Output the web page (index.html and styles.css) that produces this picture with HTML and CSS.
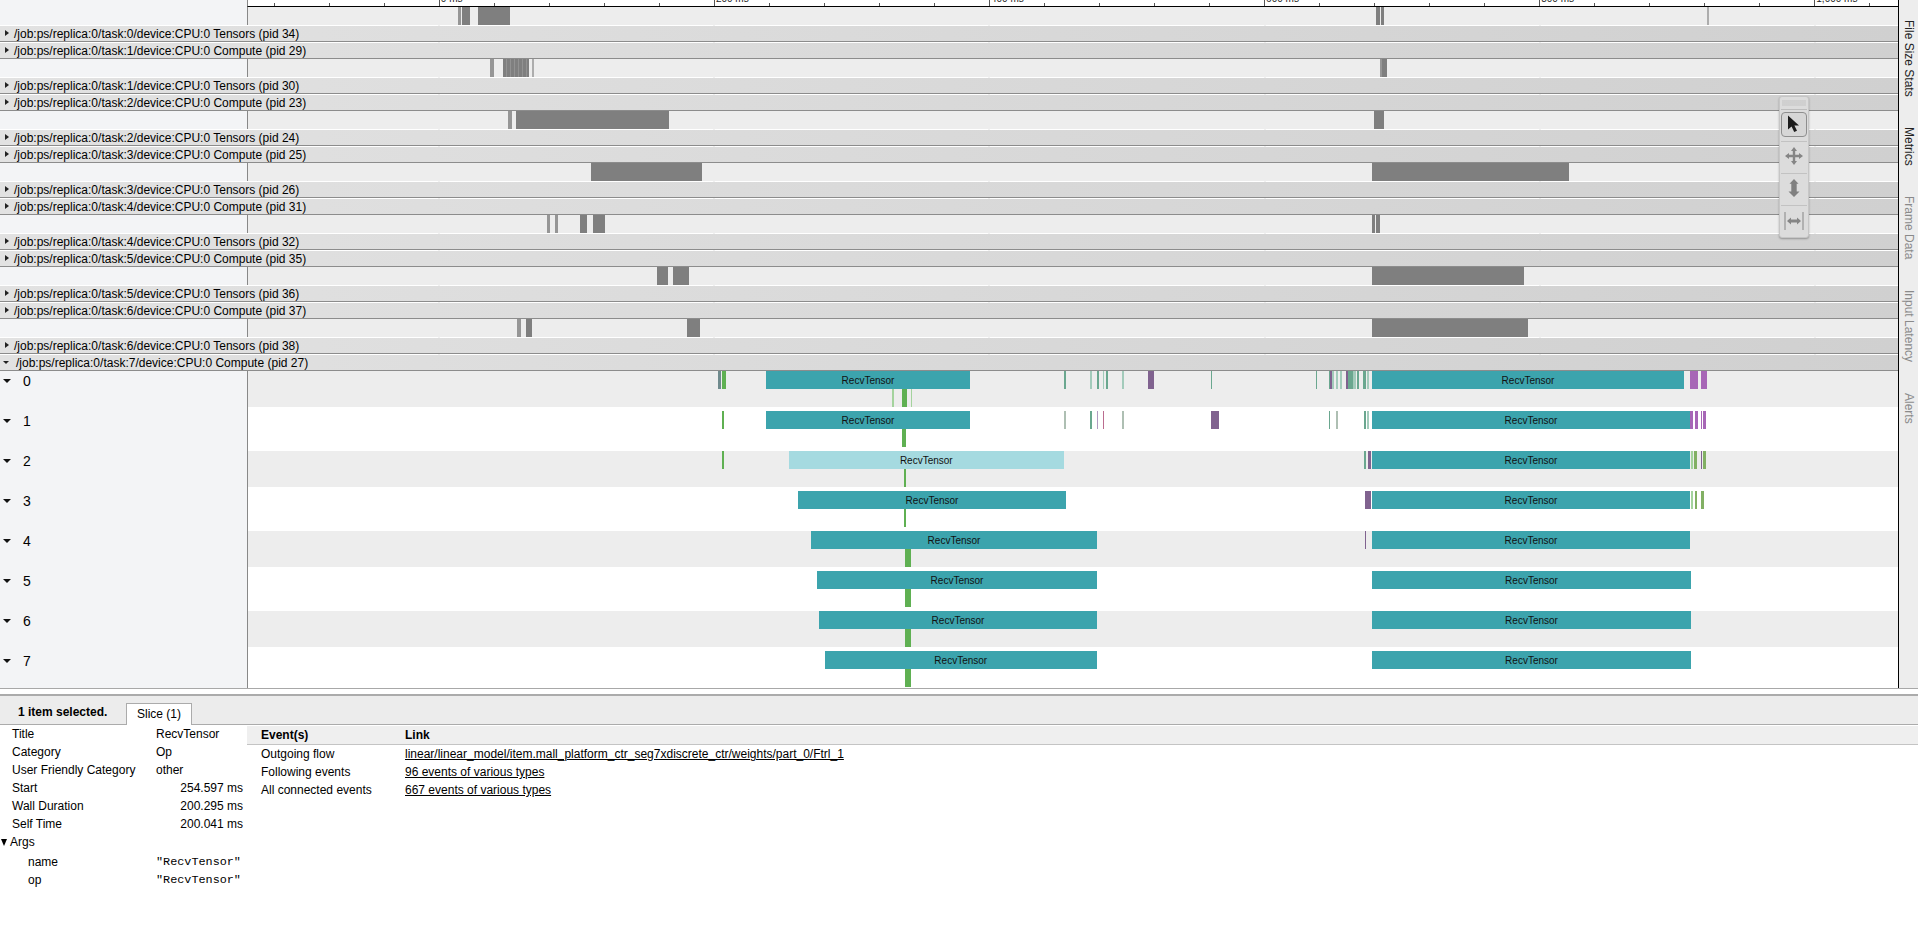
FILE: index.html
```html
<!DOCTYPE html>
<html lang="en">
<head>
<meta charset="utf-8">
<title>Trace viewer</title>
<link rel="stylesheet" href="styles.css">
</head>
<body>
<div class="app">
  <div class="timeline">
    <div class="main">
      <div class="ruler">
        <div class="ruler-left"></div>
        <div class="ruler-track">
          <i class="tick" style="left:25.5px"></i><i class="tick" style="left:80.6px"></i><i class="tick" style="left:135.7px"></i>
          <i class="tick major" style="left:190.8px"><b>0 ms</b></i>
          <i class="tick" style="left:245.8px"></i><i class="tick" style="left:300.8px"></i><i class="tick" style="left:355.8px"></i><i class="tick" style="left:410.8px"></i>
          <i class="tick major" style="left:465.9px"><b>200 ms</b></i>
          <i class="tick" style="left:520.9px"></i><i class="tick" style="left:575.9px"></i><i class="tick" style="left:630.9px"></i><i class="tick" style="left:685.9px"></i>
          <i class="tick major" style="left:741px"><b>400 ms</b></i>
          <i class="tick" style="left:796px"></i><i class="tick" style="left:851px"></i><i class="tick" style="left:906px"></i><i class="tick" style="left:961px"></i>
          <i class="tick major" style="left:1016.1px"><b>600 ms</b></i>
          <i class="tick" style="left:1071.1px"></i><i class="tick" style="left:1126.1px"></i><i class="tick" style="left:1181.1px"></i><i class="tick" style="left:1236.1px"></i>
          <i class="tick major" style="left:1291.2px"><b>800 ms</b></i>
          <i class="tick" style="left:1346.2px"></i><i class="tick" style="left:1401.2px"></i><i class="tick" style="left:1456.2px"></i><i class="tick" style="left:1511.2px"></i>
          <i class="tick major" style="left:1566.3px"><b>1,000 ms</b></i>
          <i class="tick" style="left:1621.3px"></i>
        </div>
      </div>

      <div class="tracks">
        <div class="grid">
          <i style="left:438.2px"></i><i style="left:713.3px"></i><i style="left:988.4px"></i><i style="left:1263.5px"></i><i style="left:1538.6px"></i><i style="left:1813.7px"></i>
        </div>

        <div class="slices">
          <div class="gutter"></div>
          <div class="lane">
            <i class="s lite" style="left:210px;width:2.5px"></i><i class="s" style="left:214px;width:7.5px"></i><i class="s" style="left:229.6px;width:32px"></i>
            <i class="s" style="left:1128px;width:4px"></i><i class="s" style="left:1133px;width:3px"></i><i class="s pale" style="left:1459.4px;width:1.6px"></i>
          </div>
        </div>
        <div class="head gap"><i class="tri"></i>/job:ps/replica:0/task:0/device:CPU:0 Tensors (pid 34)</div>
        <div class="head"><i class="tri"></i>/job:ps/replica:0/task:1/device:CPU:0 Compute (pid 29)</div>
        <div class="slices">
          <div class="gutter"></div>
          <div class="lane">
            <i class="s lite" style="left:242px;width:4px"></i><i class="s stripe" style="left:255px;width:26px"></i><i class="s pale" style="left:284px;width:2px"></i>
            <i class="s lite" style="left:1132.4px;width:2px"></i><i class="s" style="left:1134.4px;width:5px"></i>
          </div>
        </div>
        <div class="head gap"><i class="tri"></i>/job:ps/replica:0/task:1/device:CPU:0 Tensors (pid 30)</div>
        <div class="head"><i class="tri"></i>/job:ps/replica:0/task:2/device:CPU:0 Compute (pid 23)</div>
        <div class="slices">
          <div class="gutter"></div>
          <div class="lane">
            <i class="s lite" style="left:259.8px;width:4px"></i><i class="s" style="left:268px;width:153.4px"></i>
            <i class="s" style="left:1126px;width:10px"></i>
          </div>
        </div>
        <div class="head gap"><i class="tri"></i>/job:ps/replica:0/task:2/device:CPU:0 Tensors (pid 24)</div>
        <div class="head"><i class="tri"></i>/job:ps/replica:0/task:3/device:CPU:0 Compute (pid 25)</div>
        <div class="slices">
          <div class="gutter"></div>
          <div class="lane">
            <i class="s" style="left:343.4px;width:110.6px"></i>
            <i class="s" style="left:1124.3px;width:196.3px"></i>
          </div>
        </div>
        <div class="head gap"><i class="tri"></i>/job:ps/replica:0/task:3/device:CPU:0 Tensors (pid 26)</div>
        <div class="head"><i class="tri"></i>/job:ps/replica:0/task:4/device:CPU:0 Compute (pid 31)</div>
        <div class="slices">
          <div class="gutter"></div>
          <div class="lane">
            <i class="s lite" style="left:298.8px;width:3px"></i><i class="s lite" style="left:307.4px;width:3px"></i><i class="s" style="left:332px;width:7px"></i><i class="s" style="left:345px;width:12px"></i>
            <i class="s" style="left:1123.5px;width:3px"></i><i class="s" style="left:1128px;width:3.5px"></i>
          </div>
        </div>
        <div class="head gap"><i class="tri"></i>/job:ps/replica:0/task:4/device:CPU:0 Tensors (pid 32)</div>
        <div class="head"><i class="tri"></i>/job:ps/replica:0/task:5/device:CPU:0 Compute (pid 35)</div>
        <div class="slices">
          <div class="gutter"></div>
          <div class="lane">
            <i class="s" style="left:409px;width:11px"></i><i class="s" style="left:425px;width:15.6px"></i>
            <i class="s" style="left:1124px;width:152px"></i>
          </div>
        </div>
        <div class="head gap"><i class="tri"></i>/job:ps/replica:0/task:5/device:CPU:0 Tensors (pid 36)</div>
        <div class="head"><i class="tri"></i>/job:ps/replica:0/task:6/device:CPU:0 Compute (pid 37)</div>
        <div class="slices">
          <div class="gutter"></div>
          <div class="lane">
            <i class="s lite" style="left:269.4px;width:3.6px"></i><i class="s" style="left:278px;width:6px"></i><i class="s" style="left:439.4px;width:12.2px"></i>
            <i class="s" style="left:1124px;width:156px"></i>
          </div>
        </div>
        <div class="head gap"><i class="tri"></i>/job:ps/replica:0/task:6/device:CPU:0 Tensors (pid 38)</div>
        <div class="head open"><i class="tri"></i>/job:ps/replica:0/task:7/device:CPU:0 Compute (pid 27)</div>

        <div class="thread even">
          <div class="tlabel"><i class="tri-d"></i>0</div>
          <div class="tlane">
            <i class="m gb t1" style="left:470px;width:2.7px"></i><i class="m g t1" style="left:474px;width:4px"></i>
            <i class="bar" style="left:518px;width:204px">RecvTensor</i>
            <i class="m gl t2" style="left:644px;width:2px"></i><i class="m g t2" style="left:654px;width:5.3px"></i><i class="m gl t2" style="left:663px;width:1px"></i>
            <i class="m tg t1" style="left:816.3px;width:1.7px"></i><i class="m tgl t1" style="left:842px;width:2px"></i><i class="m tg t1" style="left:849px;width:1.6px"></i><i class="m tgl t1" style="left:854.5px;width:1.5px"></i><i class="m tg t1" style="left:858px;width:1.5px"></i><i class="m tgl t1" style="left:874px;width:2px"></i><i class="m p t1" style="left:900px;width:5.6px"></i><i class="m tg t1" style="left:963px;width:1px"></i>
            <i class="m tg t1" style="left:1068px;width:1.3px"></i><i class="m tg t1" style="left:1081px;width:1px"></i><i class="m p t1" style="left:1082px;width:1.7px"></i><i class="m tgl t1" style="left:1084.3px;width:1.4px"></i><i class="m tgl t1" style="left:1088px;width:1.5px"></i><i class="m tgl t1" style="left:1092px;width:2px"></i><i class="m p t1" style="left:1098.3px;width:2px"></i><i class="m tg t1" style="left:1100.3px;width:4.5px"></i><i class="m tgl t1" style="left:1105.3px;width:2.7px"></i><i class="m tg t1" style="left:1109px;width:2.4px"></i><i class="m tg t1" style="left:1115px;width:2.7px"></i><i class="m tgl t1" style="left:1119px;width:2px"></i>
            <i class="bar" style="left:1124px;width:312px">RecvTensor</i>
            <i class="m pl t1" style="left:1442px;width:7.7px"></i><i class="m pl t1" style="left:1453px;width:5.7px"></i>
          </div>
        </div>

        <div class="thread odd">
          <div class="tlabel"><i class="tri-d"></i>1</div>
          <div class="tlane">
            <i class="m g t1" style="left:474px;width:2px"></i>
            <i class="bar" style="left:518px;width:204px">RecvTensor</i>
            <i class="m g t2" style="left:654px;width:4px"></i>
            <i class="m gy t1" style="left:816px;width:2px"></i><i class="m tg t1" style="left:842px;width:1.5px"></i><i class="m pp t1" style="left:849px;width:1px"></i><i class="m pk t1" style="left:854.5px;width:1.5px"></i><i class="m gy t1" style="left:874px;width:2px"></i><i class="m p t1" style="left:963px;width:7.6px"></i>
            <i class="m tg t1" style="left:1081px;width:1px"></i><i class="m gy t1" style="left:1088px;width:1.7px"></i><i class="m tg t1" style="left:1116px;width:2px"></i><i class="m tgl t1" style="left:1119px;width:2px"></i>
            <i class="bar" style="left:1124px;width:318px">RecvTensor</i>
            <i class="m pl t1" style="left:1442px;width:3.3px"></i><i class="m pl t1" style="left:1446.7px;width:3.3px"></i><i class="m pl t1" style="left:1453px;width:1px"></i><i class="m pl t1" style="left:1454.7px;width:3.3px"></i>
          </div>
        </div>

        <div class="thread even">
          <div class="tlabel"><i class="tri-d"></i>2</div>
          <div class="tlane">
            <i class="m g t1" style="left:474px;width:2px"></i>
            <i class="bar sel" style="left:540.6px;width:275.4px">RecvTensor</i>
            <i class="m g t2" style="left:656px;width:2px"></i>
            <i class="m tg t1" style="left:1116px;width:2px"></i><i class="m p t1" style="left:1119.7px;width:3.3px"></i>
            <i class="bar" style="left:1124px;width:318px">RecvTensor</i>
            <i class="m gl t1" style="left:1442.7px;width:2px"></i><i class="m ol t1" style="left:1446px;width:3px"></i><i class="m p t1" style="left:1453px;width:1px"></i><i class="m ol t1" style="left:1454.7px;width:3.3px"></i>
          </div>
        </div>

        <div class="thread odd">
          <div class="tlabel"><i class="tri-d"></i>3</div>
          <div class="tlane">
            <i class="bar" style="left:550px;width:268px">RecvTensor</i>
            <i class="m g t2" style="left:656px;width:2px"></i>
            <i class="m p t1" style="left:1117px;width:6px"></i>
            <i class="bar" style="left:1124px;width:318px">RecvTensor</i>
            <i class="m gl t1" style="left:1442.7px;width:2px"></i><i class="m ol t1" style="left:1447px;width:2px"></i><i class="m ol t1" style="left:1453px;width:2.7px"></i>
          </div>
        </div>

        <div class="thread even">
          <div class="tlabel"><i class="tri-d"></i>4</div>
          <div class="tlane">
            <i class="bar" style="left:563px;width:286px">RecvTensor</i>
            <i class="m g t2" style="left:657px;width:6px"></i>
            <i class="m p t1" style="left:1117px;width:1px"></i>
            <i class="bar" style="left:1124px;width:318px">RecvTensor</i>
          </div>
        </div>

        <div class="thread odd">
          <div class="tlabel"><i class="tri-d"></i>5</div>
          <div class="tlane">
            <i class="bar" style="left:569px;width:280px">RecvTensor</i>
            <i class="m g t2" style="left:657px;width:6px"></i>
            <i class="bar" style="left:1124px;width:319px">RecvTensor</i>
          </div>
        </div>

        <div class="thread even">
          <div class="tlabel"><i class="tri-d"></i>6</div>
          <div class="tlane">
            <i class="bar" style="left:571px;width:278px">RecvTensor</i>
            <i class="m g t2" style="left:657px;width:6px"></i>
            <i class="bar" style="left:1124px;width:319px">RecvTensor</i>
          </div>
        </div>

        <div class="thread odd">
          <div class="tlabel"><i class="tri-d"></i>7</div>
          <div class="tlane">
            <i class="bar" style="left:576.5px;width:272.5px">RecvTensor</i>
            <i class="m g t2" style="left:657px;width:6px"></i>
            <i class="bar" style="left:1124px;width:319px">RecvTensor</i>
          </div>
        </div>
      </div>
    </div>

    <div class="side">
      <span class="vt on">File Size Stats</span>
      <span class="vt on">Metrics</span>
      <span class="vt">Frame Data</span>
      <span class="vt">Input Latency</span>
      <span class="vt">Alerts</span>
    </div>

    <div class="palette">
      <div class="grip"></div>
      <div class="tool">
        <span class="btn">
          <svg width="14" height="18" viewBox="0 0 14 18"><path fill="#1c1c1c" d="M1 0.5V14.5L4.6 11.4L7.2 17L10 15.7L7.4 10.4H12Z"/></svg>
        </span>
      </div>
      <div class="tool">
        <svg width="18" height="18" viewBox="0 0 18 18"><path fill="#858585" d="M9 0L12 4H10.2V7.8H14V6L18 9L14 12V10.2H10.2V14H12L9 18L6 14H7.8V10.2H4V12L0 9L4 6V7.8H7.8V4H6Z"/></svg>
      </div>
      <div class="tool">
        <svg width="12" height="18" viewBox="0 0 12 18"><path fill="#808080" d="M6 0L10.5 4.8H8.7V12.6H11.5L6 18L0.5 12.6H3.3V4.8H1.5Z"/></svg>
      </div>
      <div class="tool">
        <svg width="20" height="18" viewBox="0 0 20 18"><path fill="#858585" d="M0.5 0H1.5V18H0.5ZM18.5 0H19.5V18H18.5ZM3 9L7 5.5V7.5H13V5.5L17 9L13 12.5V10.5H7V12.5Z"/></svg>
      </div>
    </div>
  </div>

  <div class="splitter"></div>

  <div class="panel">
    <div class="tabs">
      <span class="count">1 item selected.</span>
      <span class="tab">Slice (1)</span>
    </div>
    <div class="detail">
      <div class="props">
        <div class="prop"><span class="key">Title</span><span class="val">RecvTensor</span></div>
        <div class="prop"><span class="key">Category</span><span class="val">Op</span></div>
        <div class="prop"><span class="key">User Friendly Category</span><span class="val">other</span></div>
        <div class="prop"><span class="key">Start</span><span class="val num">254.597 ms</span></div>
        <div class="prop"><span class="key">Wall Duration</span><span class="val num">200.295 ms</span></div>
        <div class="prop"><span class="key">Self Time</span><span class="val num">200.041 ms</span></div>
        <div class="args"><i class="tri-args"></i>Args</div>
        <div class="prop arg"><span class="key">name</span><span class="val mono">"RecvTensor"</span></div>
        <div class="prop arg"><span class="key">op</span><span class="val mono">"RecvTensor"</span></div>
      </div>
      <div class="flows">
        <div class="flow flow-head"><span class="ev">Event(s)</span><span>Link</span></div>
        <div class="flow"><span class="ev">Outgoing flow</span><a href="#">linear/linear_model/item.mall_platform_ctr_seg7xdiscrete_ctr/weights/part_0/Ftrl_1</a></div>
        <div class="flow"><span class="ev">Following events</span><a href="#">96 events of various types</a></div>
        <div class="flow"><span class="ev">All connected events</span><a href="#">667 events of various types</a></div>
      </div>
    </div>
  </div>
</div>
</body>
</html>
```
FILE: styles.css
```css
* { box-sizing: border-box; }
html, body { margin: 0; height: 100%; background: #fff; overflow: hidden; }
body { font: 12px "Liberation Sans", Arial, sans-serif; color: #000; }
i { font-style: normal; display: block; }

.app { width: 1918px; height: 948px; display: flex; flex-direction: column; overflow: hidden; }

.timeline { position: relative; height: 689px; flex: none; display: flex; border-bottom: 1px solid #a8a8a8; }
.main { flex: 1; min-width: 0; display: flex; flex-direction: column; }

.ruler { height: 7px; flex: none; display: flex; }
.ruler-left { width: 247px; background: #f3f4f6; }
.ruler-track { flex: 1; position: relative; overflow: hidden; background: #fff; border-left: 1px solid #888; border-bottom: 1px solid #000; }
.tick { position: absolute; bottom: 0; width: 1px; height: 3px; background: #555; }
.tick.major { height: 6px; background: #555; }
.tick b { position: absolute; left: 2px; bottom: 2px; font: 10px/10px "Liberation Sans", Arial, sans-serif; color: #222; white-space: nowrap; }

.tracks { position: relative; flex: 1; min-height: 0; overflow: hidden; }
.grid { position: absolute; inset: 0; pointer-events: none; }
.grid i { position: absolute; top: 0; bottom: 0; width: 2px; background: rgba(0, 0, 0, .055); }

.slices { height: 18px; margin-bottom: 1px; display: flex; }
.gutter { width: 247px; flex: none; background: #f3f4f6; }
.lane { flex: 1; position: relative; background: #ededed; border-left: 1px solid #888; }
.s { position: absolute; top: 0; bottom: 0; background: #7f7f7f; z-index: 1; }
.s.lite { background: #969696; }
.s.pale { background: #adadad; }
.s.stripe { background: repeating-linear-gradient(90deg, #7f7f7f 0 3px, #929292 3px 4px); }

.head { height: 16px; line-height: 16px; padding-left: 14px; white-space: nowrap; position: relative;
  border-bottom: 1px solid #8c8c8c;
  background: linear-gradient(to right, #e2e2e2, #d0d0d0); }
.head.gap { margin-bottom: 1px; }
.head.open { padding-left: 16px; }
.tri { position: absolute; left: 5px; top: 4px; width: 0; height: 0; border-style: solid; border-width: 3.5px 0 3.5px 4px; border-color: transparent transparent transparent #222; }
.head.open .tri { left: 3px; top: 6px; border-width: 3.5px 3.5px 0 3.5px; border-color: #222 transparent transparent transparent; }

.thread { display: flex; }
.thread.even { height: 36px; }
.thread.odd { height: 44px; }
.tlabel { width: 247px; flex: none; background: #f3f4f6; position: relative; font-size: 14px; line-height: 20px; padding-left: 23px; }
.thread.odd .tlabel { padding-top: 4px; }
.tri-d { position: absolute; left: 3px; top: 8px; width: 0; height: 0; border-style: solid; border-width: 4px 4.5px 0 4.5px; border-color: #111 transparent transparent transparent; }
.thread.odd .tri-d { top: 12px; }
.tlane { flex: 1; position: relative; border-left: 1px solid #888; }
.thread.even .tlane { background: #ededed; }
.thread.odd .tlane { background: #fff; }
.bar, .m { position: absolute; height: 18px; z-index: 1; }
.thread.odd .m.t1, .thread.odd .bar { top: 4px; }
.thread.odd .m.t2 { top: 22px; }
.thread.even .m.t1, .thread.even .bar { top: 0; }
.thread.even .m.t2 { top: 18px; }
.bar { background: #3ca4ad; color: #111; font-size: 10px; line-height: 20px; text-align: center; white-space: nowrap; }
.bar.sel { background: #a5dae0; }
.m.g { background: #5fb052; }
.m.gl { background: #a4d39d; }
.m.gb { background: #6f8a8d; }
.m.tg { background: #6aa78f; }
.m.tgl { background: #a3cbbb; }
.m.gy { background: #aebfb3; }
.m.p { background: #80628f; }
.m.pp { background: #b29ac2; }
.m.pl { background: #a766b6; }
.m.pk { background: #bb6c8f; }
.m.ol { background: #82b064; }

.side { width: 20px; flex: none; background: #ededed; border-left: 1px solid #000; padding-top: 20px; display: flex; flex-direction: column; align-items: center; gap: 30.5px; }
.vt { writing-mode: vertical-rl; white-space: nowrap; color: #8a8a8a; font-size: 12px; line-height: 14px; }
.vt.on { color: #222; }

.palette { position: absolute; left: 1778.5px; top: 96px; width: 30px; height: 142px; z-index: 3; background: #dcdcdc; border: 1px solid #c6c6c6; border-radius: 3px; box-shadow: 0 1px 2px rgba(0, 0, 0, .3); display: flex; flex-direction: column; }
.grip { height: 13px; flex: none; margin: 0 1px; border-bottom: 1px solid #bdbdbd; }
.grip::before { content: ""; display: block; height: 6px; margin: 3px 1px 0; background-image: radial-gradient(circle, #a2a2a2 .55px, transparent .75px); background-size: 2px 2px; }
.tool { flex: none; height: 32px; padding-bottom: 3px; display: flex; align-items: center; justify-content: center; border-bottom: 1px solid #c2c2c2; margin: 0 1px; }
.tool:last-child { border-bottom: 0; }
.btn { width: 26px; height: 25px; display: flex; align-items: center; justify-content: center; background: #d6d6d6; border: 1px solid #8e8e8e; border-radius: 4px; }

.splitter { height: 2px; flex: none; margin-top: 5px; background: #ababab; }

.panel { flex: 1; display: flex; flex-direction: column; min-height: 0; }
.tabs { height: 29px; flex: none; background: #ececec; border-bottom: 1px solid #ababab; display: flex; align-items: flex-end; padding-left: 18px; position: relative; }
.count { font-weight: bold; width: 108px; flex: none; height: 23px; line-height: 23px; }
.tab { width: 66px; height: 22px; line-height: 20px; text-align: center; background: #fff; border: 1px solid #ababab; border-bottom: 0; margin-bottom: -1px; }

.detail { display: flex; flex: 1; min-height: 0; }
.props { width: 247px; flex: none; }
.prop { display: flex; height: 18px; line-height: 18px; padding-left: 12px; }
.key { width: 144px; flex: none; white-space: nowrap; }
.val { white-space: nowrap; }
.val.num { width: 87px; text-align: right; }
.val.mono { font: 11.8px/18px "Liberation Mono", monospace; }
.args { position: relative; height: 20px; line-height: 18px; padding-left: 10px; }
.tri-args { position: absolute; left: 1px; top: 6px; width: 0; height: 0; border-style: solid; border-width: 7px 3.5px 0 3.5px; border-color: #000 transparent transparent transparent; }
.prop.arg { padding-left: 28px; }
.prop.arg .key { width: 128px; }

.flows { flex: 1; min-width: 0; }
.flow { display: flex; height: 18px; line-height: 18px; padding-left: 14px; white-space: nowrap; }
.flow-head { height: 19px; margin-top: 1px; font-weight: bold; background: #efefef; border-bottom: 1px solid #c4c4c4; }
.ev { width: 144px; flex: none; }
.flow a { color: #000; text-decoration: underline; }
```
